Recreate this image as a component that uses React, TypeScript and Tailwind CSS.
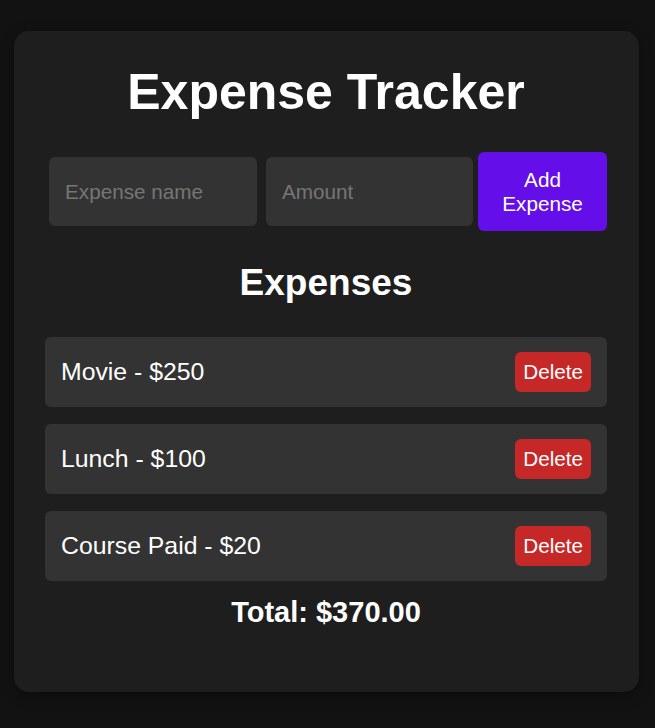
import React from "react";

const expenses = [
  { name: "Movie", amount: 250 },
  { name: "Lunch", amount: 100 },
  { name: "Course Paid", amount: 20 },
];

export default function App() {
  return (
    <div
      className="min-h-[728px] w-full bg-[#121212] pt-[31px] pb-[36px]"
      style={{ fontFamily: '"Liberation Sans", Arial, Helvetica, sans-serif' }}
    >
      <div className="ml-[14px] w-[625px] rounded-[15px] bg-[#1e1e1e] pt-[32px] pb-[64px] pl-[31px] pr-[32px] shadow-[0_4px_14px_rgba(0,0,0,0.35)]">
        <h1 className="text-center text-[50px] font-bold leading-[58px] text-white">
          Expense Tracker
        </h1>

        <div className="mt-[31px] flex h-[79px] items-center">
          <input
            placeholder="Expense name"
            className="ml-[4px] h-[69px] w-[208px] rounded-[6px] bg-[#333333] pl-[16px] text-[20.7px] text-white outline-none placeholder:text-[#767676]"
          />
          <input
            placeholder="Amount"
            className="ml-[9px] h-[69px] w-[207px] rounded-[6px] bg-[#333333] pl-[16px] text-[20.7px] text-white outline-none placeholder:text-[#767676]"
          />
          <button className="ml-[5px] h-[79px] w-[129px] rounded-[6px] bg-[#640ee9] text-[20.7px] leading-[24px] text-white">
            Add
            <br />
            Expense
          </button>
        </div>

        <h2 className="mt-[31px] text-center text-[37px] font-bold leading-[42px] text-white">
          Expenses
        </h2>

        <ul className="mt-[33px] flex flex-col gap-[17px]">
          {expenses.map((e) => (
            <li
              key={e.name}
              className="flex h-[70px] items-center justify-between rounded-[6px] bg-[#333333] pl-[16px] pr-[16px]"
            >
              <span className="text-[24.8px] text-white">
                {e.name} - ${e.amount}
              </span>
              <button className="flex h-[40px] items-center rounded-[6px] bg-[#c62828] px-[8px] text-[20.7px] text-white">
                Delete
              </button>
            </li>
          ))}
        </ul>

        <div className="mt-[15px] text-center text-[29px] font-bold leading-[32px] text-white">
          Total: $370.00
        </div>
      </div>
    </div>
  );
}
